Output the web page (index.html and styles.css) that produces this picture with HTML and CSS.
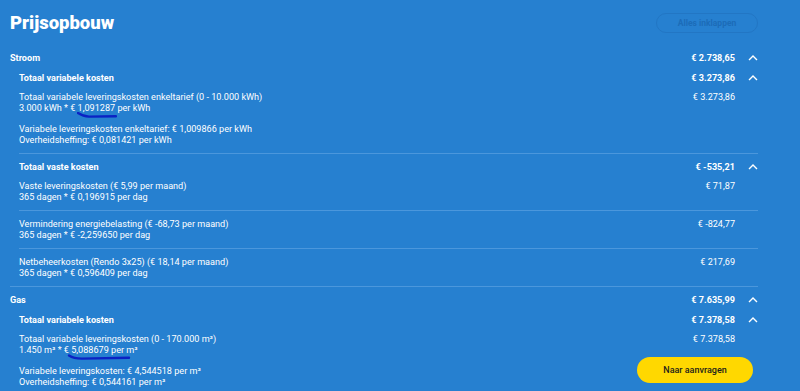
FILE: index.html
```html
<!DOCTYPE html>
<html>
<head>
    <title>Prijsopbouw</title>
    <link rel="stylesheet" href="styles.css">
</head>
<body>
    <div class="page">
        <div class="top">
            <h1>Prijsopbouw</h1>
            <button class="collapse">Alles inklappen</button>
        </div>

        <section class="sec">
            <div class="row head">
                <span class="desc">Stroom</span>
                <span class="amt">€ 2.738,65</span>
                <span class="chev"><svg viewBox="0 0 10 6"><path d="M1 5 L5 1 L9 5"/></svg></span>
            </div>

            <div class="group">
                <div class="row head">
                    <span class="desc">Totaal variabele kosten</span>
                    <span class="amt">€ 3.273,86</span>
                    <span class="chev"><svg viewBox="0 0 10 6"><path d="M1 5 L5 1 L9 5"/></svg></span>
                </div>
                <div class="item">
                    <div class="row">
                        <div class="desc">
                            <div>Totaal variabele leveringskosten enkeltarief (0 - 10.000 kWh)</div>
                            <div>3.000 kWh * € <span class="mark">1,091287<svg class="scribble one" viewBox="0 0 40 6"><path d="M1 1 C4 3 7 4.5 12 4.6 L39 4.2"/></svg></span> per kWh</div>
                        </div>
                        <span class="amt">€ 3.273,86</span>
                        <span class="chev"></span>
                    </div>
                    <div class="note">
                        <div>Variabele leveringskosten enkeltarief: € 1,009866 per kWh</div>
                        <div>Overheidsheffing: € 0,081421 per kWh</div>
                    </div>
                </div>
            </div>

            <div class="group">
                <div class="row head">
                    <span class="desc">Totaal vaste kosten</span>
                    <span class="amt">€ -535,21</span>
                    <span class="chev"><svg viewBox="0 0 10 6"><path d="M1 5 L5 1 L9 5"/></svg></span>
                </div>
                <div class="item">
                    <div class="row">
                        <div class="desc">
                            <div>Vaste leveringskosten (€ 5,99 per maand)</div>
                            <div>365 dagen * € 0,196915 per dag</div>
                        </div>
                        <span class="amt">€ 71,87</span>
                        <span class="chev"></span>
                    </div>
                </div>
                <div class="item">
                    <div class="row">
                        <div class="desc">
                            <div>Vermindering energiebelasting (€ -68,73 per maand)</div>
                            <div>365 dagen * € -2,259650 per dag</div>
                        </div>
                        <span class="amt">€ -824,77</span>
                        <span class="chev"></span>
                    </div>
                </div>
                <div class="item">
                    <div class="row">
                        <div class="desc">
                            <div>Netbeheerkosten (Rendo 3x25) (€ 18,14 per maand)</div>
                            <div>365 dagen * € 0,596409 per dag</div>
                        </div>
                        <span class="amt">€ 217,69</span>
                        <span class="chev"></span>
                    </div>
                </div>
            </div>
        </section>

        <section class="sec">
            <div class="row head">
                <span class="desc">Gas</span>
                <span class="amt">€ 7.635,99</span>
                <span class="chev"><svg viewBox="0 0 10 6"><path d="M1 5 L5 1 L9 5"/></svg></span>
            </div>

            <div class="group">
                <div class="row head">
                    <span class="desc">Totaal variabele kosten</span>
                    <span class="amt">€ 7.378,58</span>
                    <span class="chev"><svg viewBox="0 0 10 6"><path d="M1 5 L5 1 L9 5"/></svg></span>
                </div>
                <div class="item">
                    <div class="row">
                        <div class="desc">
                            <div>Totaal variabele leveringskosten (0 - 170.000 m³)</div>
                            <div>1.450 m³ * € <span class="mark">5,088679 per m³<svg class="scribble two" viewBox="0 0 62 6"><path d="M1 1.5 C4 3.5 8 4.6 14 4.6 L61 3.8"/></svg></span></div>
                        </div>
                        <span class="amt">€ 7.378,58</span>
                        <span class="chev"></span>
                    </div>
                    <div class="note">
                        <div>Variabele leveringskosten: € 4,544518 per m³</div>
                        <div>Overheidsheffing: € 0,544161 per m³</div>
                    </div>
                </div>
            </div>
        </section>
    </div>

    <button class="cta">Naar aanvragen</button>
</body>
</html>
```

FILE: styles.css
```css
body {
    margin: 0;
    background-color: #2680d0;
    color: #fff;
    font-family: Roboto, "Liberation Sans", sans-serif;
    font-size: 9.1px;
    overflow: hidden;
}

.page {
    padding: 11px 42px 0 10px;
}

.top {
    display: flex;
    justify-content: space-between;
    align-items: center;
    height: 24px;
}

h1 {
    margin: 0;
    font-size: 18.5px;
    font-weight: 900;
    line-height: 24px;
}

.collapse {
    width: 102px;
    height: 20px;
    border: 1px solid #2276c4;
    border-radius: 10px;
    background: transparent;
    color: #1c6cb8;
    font-family: inherit;
    font-size: 8.5px;
    font-weight: 700;
}

.sec {
    margin-top: 13px;
}

.sec + .sec {
    margin-top: 0;
    padding-top: 3px;
    border-top: 1px solid #4b97dc;
}

.row {
    display: flex;
    align-items: flex-start;
    line-height: 11px;
}

.row.head {
    align-items: center;
    line-height: 20px;
    font-weight: 700;
}

.desc {
    flex: 1;
}

.amt {
    text-align: right;
}

.chev {
    width: 10px;
    margin-left: 13px;
    display: flex;
    align-items: center;
}

.chev svg {
    width: 10px;
    height: 6px;
    fill: none;
    stroke: #fff;
    stroke-width: 1.4;
}

.group {
    margin-left: 9px;
}

.group + .group {
    padding-top: 3px;
    border-top: 1px solid #4b97dc;
}

.item {
    padding: 8px 0 7px;
}

.item:nth-child(2) {
    padding-top: 4px;
}

.item + .item {
    border-top: 1px solid #4b97dc;
}

.note {
    margin-top: 10px;
    line-height: 11px;
}

.mark {
    position: relative;
}

.scribble {
    position: absolute;
    left: -1px;
    top: 9px;
    height: 6px;
    fill: none;
    stroke: #0b22c4;
    stroke-width: 2.4;
    stroke-linecap: round;
}

.scribble.one {
    width: 40px;
}

.scribble.two {
    width: 64px;
    left: -4px;
}

.cta {
    position: fixed;
    right: 47px;
    bottom: 8px;
    width: 116px;
    height: 26px;
    border: none;
    border-radius: 13px;
    background-color: #ffd800;
    color: #1d1d1b;
    font-family: inherit;
    font-size: 9px;
    font-weight: 500;
}
```
